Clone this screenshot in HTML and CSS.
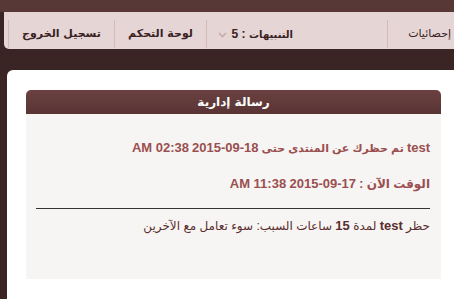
FILE: index.html
```html
<!DOCTYPE html>
<html lang="ar" dir="rtl">
<head>
    <meta charset="UTF-8">
    <title>رسالة إدارية</title>
    <link rel="stylesheet" href="styles.css">
</head>
<body>
    <div class="top-band"></div>

    <!-- Navigation -->
    <div class="nav">
        <a href="#" class="nav-item stats">إحصائيات</a>
        <a href="#" class="nav-item alerts">
            <span>التنبيهات <span class="num">: 5</span></span>
            <svg class="chevron" width="9" height="6" viewBox="0 0 9 6">
                <path d="M1 1 L4.5 4.5 L8 1" fill="none" stroke="#c9aaaa" stroke-width="1.6"/>
            </svg>
        </a>
        <a href="#" class="nav-item panel-link">لوحة التحكم</a>
        <a href="#" class="nav-item logout">تسجيل الخروج</a>
    </div>

    <!-- Main -->
    <div class="page">
        <div class="box">
            <div class="box-title">رسالة إدارية</div>
            <div class="box-body">
                <p class="line"><span class="en">test</span> تم حظرك عن المنتدى حتى <bdi class="en" dir="ltr">2015-09-18</bdi> <span class="en">02:38 AM</span></p>
                <p class="line second">الوقت الآن : <bdi class="en" dir="ltr">2015-09-17</bdi> <span class="en">11:38 AM</span></p>
                <hr>
                <p class="reason">حظر <b class="en">test</b> لمدة <b class="en">15</b> ساعات السبب: سوء تعامل مع الآخرين</p>
            </div>
        </div>
    </div>
</body>
</html>
```

FILE: styles.css
```css
html, body {
    height: 100%;
}

body {
    margin: 0;
    display: flex;
    flex-direction: column;
    background-color: #3b2424;
    font-family: "Liberation Sans", "DejaVu Sans", sans-serif;
    overflow: hidden;
}

.top-band {
    height: 12px;
    flex-shrink: 0;
    background-color: #583737;
}

/* Navigation */
.nav {
    display: flex;
    flex-shrink: 0;
    height: 37px;
    margin-left: 4px;
    background-color: #e5d5d5;
    border-bottom-left-radius: 5px;
}

.nav-item {
    display: flex;
    align-items: center;
    justify-content: center;
    margin-top: 8px;
    height: 28px;
    padding-bottom: 1px;
    border-left: 1px solid #d6baba;
    color: #3a2222;
    font-family: "DejaVu Sans", sans-serif;
    font-size: 11px;
    font-weight: bold;
    text-decoration: none;
    box-sizing: border-box;
}

.nav-item.stats {
    width: 67px;
    justify-content: flex-start;
    padding-right: 3px;
    font-weight: normal;
}

.nav-item.alerts {
    width: 181px;
    justify-content: flex-start;
    padding-right: 94px;
    gap: 5px;
    font-size: 10px;
}

.nav-item .num {
    font-family: "Liberation Sans", sans-serif;
    font-size: 12px;
}

.nav-item.panel-link {
    width: 92px;
}

.nav-item.logout {
    width: 106px;
}

.chevron {
    margin-top: 2px;
}

/* Main panel */
.page {
    flex: 1;
    margin-top: 21px;
    margin-left: 7px;
    padding: 20px 13px 0 19px;
    background-color: #fff;
    border-top-left-radius: 6px;
}

.box-title {
    height: 24px;
    line-height: 24px;
    text-align: center;
    color: #fff;
    font-family: "DejaVu Sans", sans-serif;
    font-size: 12px;
    font-weight: bold;
    background: linear-gradient(#6b4141, #593434);
    border-radius: 5px 5px 0 0;
}

.box-body {
    height: 165px;
    padding: 26px 11px 0 10px;
    box-sizing: border-box;
    background-color: #f7f5f3;
}

.en {
    font-family: "Liberation Sans", sans-serif;
    font-size: 13px;
}

.line {
    margin: 0 0 20px;
    line-height: 16px;
    color: #9a4f50;
    font-size: 11px;
    font-weight: bold;
}

.line.second {
    margin-bottom: 16px;
    font-size: 12px;
}

hr {
    margin: 0;
    border: 0;
    border-top: 1px solid #333;
}

.reason {
    margin: 9px 0 0;
    line-height: 16px;
    color: #5a2e2e;
    font-size: 12px;
}
```
